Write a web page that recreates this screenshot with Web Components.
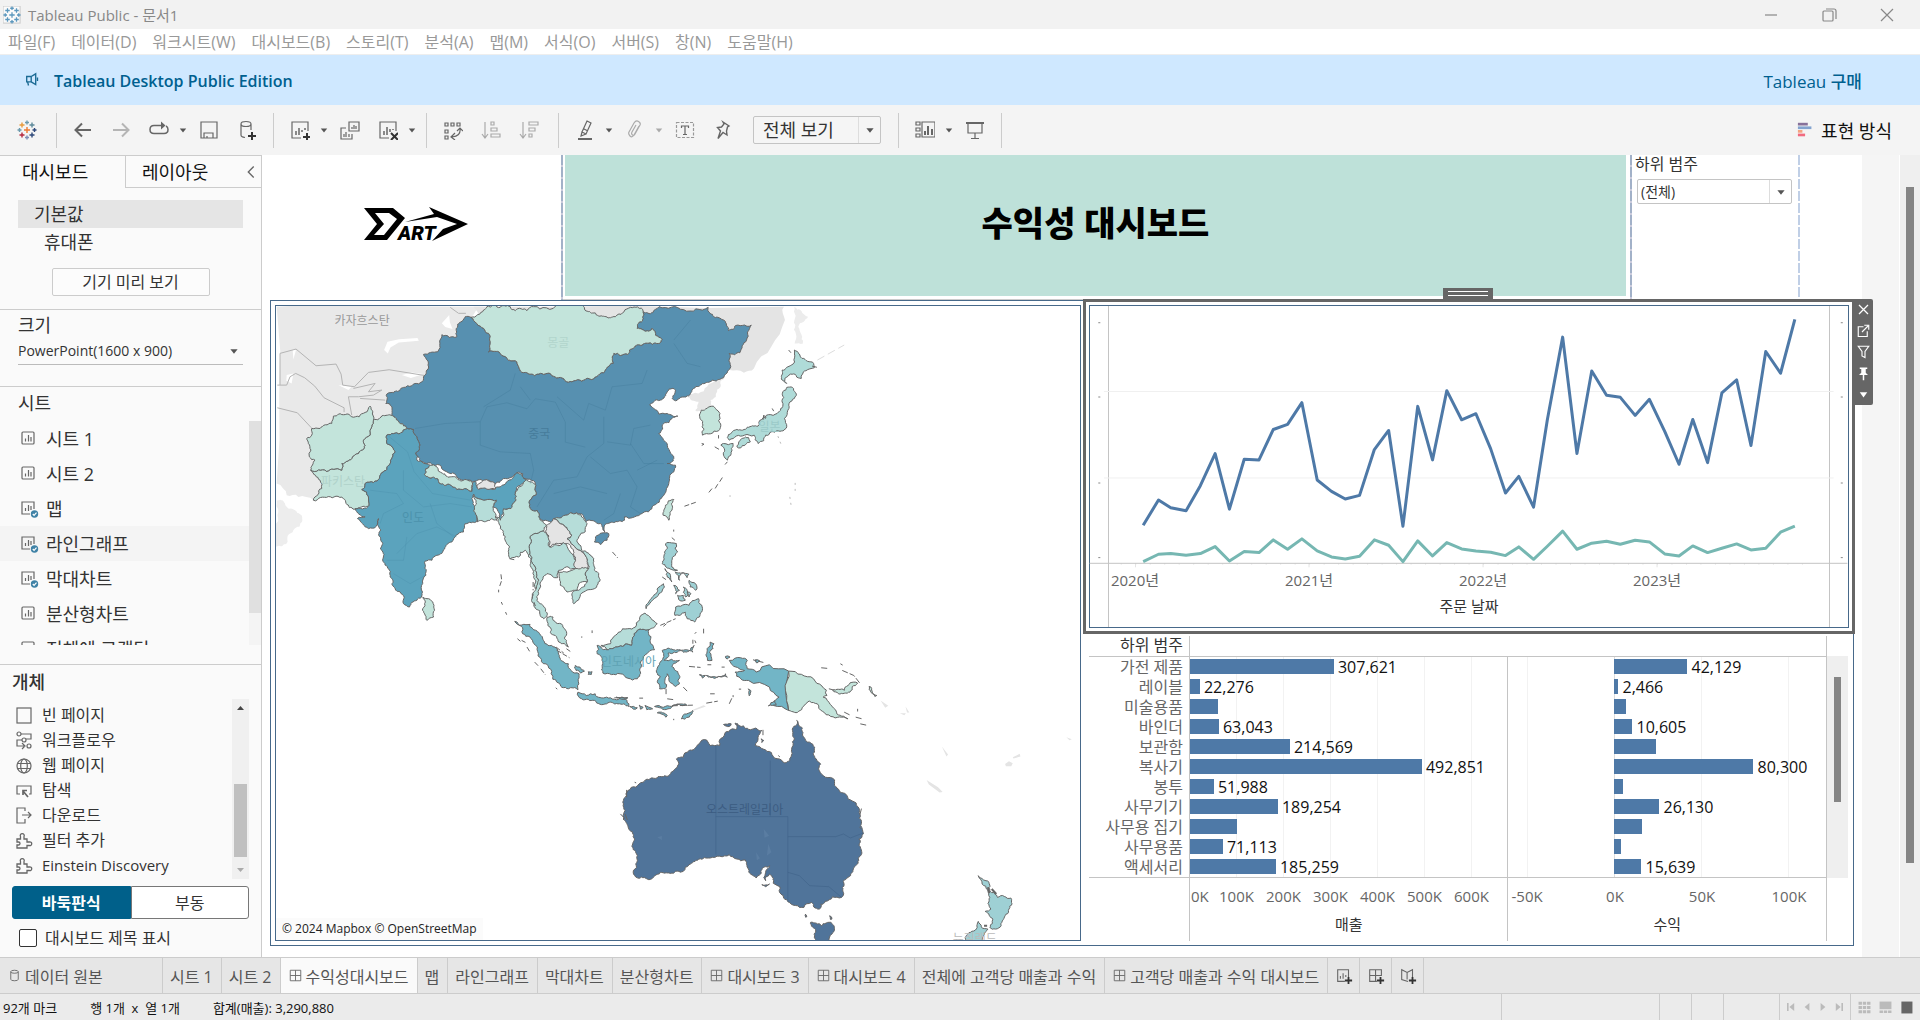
<!DOCTYPE html>
<html lang="ko">
<head>
<meta charset="utf-8">
<title>Tableau Public - 문서1</title>
<style>
html,body{margin:0;height:100%}
body{font-family:"Open Sans","Noto Sans CJK KR",sans-serif;color:#333;font-size:16px;overflow:hidden}
</style>
</head>
<body>
<app-window></app-window>
<script>
const BASE = `*{box-sizing:border-box}button,select,input{font:inherit;color:inherit;margin:0}
button{background:none;border:0;padding:0;text-align:left;white-space:nowrap}:host{display:block}`;
function define(name, css, html, after) {
  customElements.define(name, class extends HTMLElement {
    connectedCallback() {
      if (this.shadowRoot) return;
      const root = this.attachShadow({ mode: 'open' });
      root.innerHTML = `<style>${BASE}${css}</style>` + (typeof html === 'function' ? html(this) : html);
      if (after) after(this, root);
    }
  });
}

/* ---------- icons ---------- */
const plus = (x, y) => `<path d="M${x - 4} ${y}h8M${x} ${y - 4}v8" stroke="#333" stroke-width="2"/>`;
const cross = (x, y, c, r = 2) => `<path d="M${x - r} ${y}h${2 * r}M${x} ${y - r}v${2 * r}" stroke="${c}" stroke-width="1.4"/>`;
const logo = c => cross(10, 10, c[0], 3) + cross(5, 5, c[1], 2.5) + cross(15, 5, c[2], 2.5) + cross(5, 15, c[3], 2.5) + cross(15, 15, c[4], 2.5) + cross(10, 2.5, c[5]) + cross(10, 17.5, c[6]) + cross(2.5, 10, c[5]) + cross(17.5, 10, c[4]);
const ICONS = {
  app: '<rect x="0" y="0" width="19" height="19" fill="#fafafa" stroke="#ccc"/>' + logo(Array(7).fill('#5b97bd')),
  color: logo(['#eb7a32', '#e79a3c', '#5d8a9b', '#b5283f', '#2d4879', '#6c9aad', '#7d8fb6']),
  horn: '<path d="M3 5h5v6H3zM4 11l1 4M8 5l5-3v12l-5-3M15 6v4" stroke="#1b6a94" stroke-width="1.5"/>',
  back: '<path d="M18 10H3M9 3.5L2.5 10 9 16.5" stroke-width="2"/>',
  fwd: '<path d="M2 10h15M11 3.5l6.5 6.5L11 16.5" stroke="#b5b5b5" stroke-width="2"/>',
  redo: '<path d="M13 5.500H5q-4 0-4 4t4 4h10q4 0 4-4 0-2.500-2-3.500" stroke-width="1.500"/><path d="M12 1.500v8l4.500-4z" fill="#666" stroke="none"/>',
  save: '<path d="M2 2h16v16H2zM5 18v-5h9v5M8 18v-2"/>',
  db: '<path d="M4 4v11q0 2 4 2.500M4 4q0-2.500 5-2.500T14 4v6M4 4q0 2.500 5 2.500T14 4"/>' + plus(15, 16),
  sheetadd: '<path d="M11 18H2V2h16v9"/><path d="M6 15v-4M9 15V8M12 12V10M15 10V8" stroke-width="1.500"/>' + plus(17, 17),
  dup: '<path d="M9 2h10v9H9zM12 9V7M14 9V5M16 9V6M6 8H1v11h11v-5M4 17v-3M6 17v-5M9 17v-3"/>',
  clear: '<path d="M11 18H2V2h16v9"/><path d="M6 15v-4M9 15V7M12 12V9M15 10V9" stroke-width="1.500"/><path d="M13 13l7 7M20 13l-7 7" stroke="#333" stroke-width="2"/>',
  swap: '<path d="M2 3h3v3H2zM8 3h3v3H8zM14 3h3v3h-3zM2 10h3v3H2zM2 16h3v3H2zM17 9q1 7-8 8M12 13l-4 4 4 3M14 11l3-3 3 3"/>',
  asc: '<path d="M4 2v15M1 14l3 4 3-4M10 2h3v3h-3zM10 8h6v3h-6zM10 14h9v3h-9z" stroke="#aaa"/>',
  desc: '<path d="M4 2v15M1 14l3 4 3-4M10 2h9v3h-9zM10 8h6v3h-6zM10 14h3v3h-3z" stroke="#aaa"/>',
  pen: '<path d="M12 1l4 2-5 11-4-2zM7 12l-1 4 5-2M9 9l4 2"/><path d="M3 19h14" stroke-width="2"/>',
  clip: '<path d="M14 6l-5 9q-2 3-4 1t-1-4l5-9q2-3 4.500-1.500T15 5l-5 9q-1 2-2.500 1T7 12l4-7" stroke="#aaa"/>',
  text: '<rect x="1.500" y="2.500" width="17" height="15" stroke="#999" stroke-dasharray="3 1.500"/><path d="M6.500 8V6h7v2M10 6v8M8 14.500h4"/>',
  pin: '<path d="M10 2l6 4-1.500 1-1 4 .5 4-4-2.500-5 6 2.500-7.500-3-3.500 4-.5 2.500-3z" stroke-width="1.400"/>',
  cards: '<path d="M1 2h4v3H1zM1 8h4v3H1zM1 14h4v3H1zM7 2h13v15H7z"/><path d="M10 15v-4M13 15V6M17 15V9" stroke-width="2"/>',
  show: '<path d="M1 3h18" stroke-width="2"/><path d="M3 3v10h14V3M10 13v5M6 18.500h8"/>',
  showme: '<path d="M1 3.500h11" stroke="#87719a" stroke-width="3"/><path d="M1 7.500h15" stroke="#83a3cf" stroke-width="3"/><path d="M1 11.500h5" stroke="#f5a380" stroke-width="3"/><path d="M1 15.500h8" stroke="#f16b80" stroke-width="3"/>',
  caret: '<path d="M6 8h8l-4 5z" fill="#555" stroke="none"/>',
  caretoff: '<path d="M6 8h8l-4 5z" fill="#aaa" stroke="none"/>',
  left: '<path d="M13 4l-6 6 6 6" stroke-width="1.500"/>',
  sheet: '<rect x="3" y="3" width="12" height="12" rx="1"/><path d="M6.500 12.500v-3M9.500 12.500V6M12 12.500V8"/>',
  sheetok: '<path d="M11 15H3V3h12v7"/><path d="M6.500 12v-3M9.500 12V6M12 11V7"/><circle cx="15.500" cy="15" r="3.700" fill="#3f82a6" stroke="none"/><path d="M13.800 15l1.300 1.400 2.400-2.700" stroke="#fff" stroke-width="1.200"/>',
  blank: '<rect x="3" y="3" width="14" height="15"/>',
  flow: '<circle cx="5" cy="4" r="2"/><circle cx="15" cy="16" r="2"/><circle cx="10" cy="10" r="2"/><path d="M7 4h10v5h-5M8 10H3v6h7M8 13l3 3-3 3"/>',
  web: '<circle cx="10" cy="11" r="7"/><ellipse cx="10" cy="11" rx="3.300" ry="7"/><path d="M3.800 8.500h12.400M3.800 13.500h12.400"/>',
  nav: '<path d="M6 14H3V6h14v8h-2"/><path d="M14 17l-5-6M9 15v-4.500h4" stroke-width="1.700"/>',
  down: '<path d="M11 6V3H3v15h8v-4M8 10h9M14 7l3 3-3 3"/>',
  ext: '<path d="M3 9h3.500V6.500a2 2 0 1 1 3.500 0V9h3v3h2.500a1.800 1.800 0 1 1 0 3.500H13V18H3v-3h1.500a1.500 1.500 0 0 0 0-3H3z" stroke-width="1.300"/>',
  cyl: '<path d="M5 5v10q0 2 5 2t5-2V5q0-2-5-2T5 5q0 2 5 2t5-2"/>',
  grid: '<path d="M3 3h14v14H3zM10 3v14M3 10h14"/>',
  addsheet: '<path d="M11 16H3V3h12v8M6 13v-3M9 13V7M12 11V9"/>' + plus(15, 15),
  adddash: '<path d="M11 16H3V3h13v7M3 9.500h13M9.500 3v13"/>' + plus(15, 15),
  addstory: '<path d="M10 16l-7-2V3l6 3 6-3v8M9 6v8"/>' + plus(15, 15),
  min: '<path d="M4 10h12" stroke="#888"/>',
  max: '<rect x="4" y="6" width="10" height="10" rx="1" stroke="#888"/><path d="M7 4h8q2 0 2 2v8" stroke="#888"/>',
  close: '<path d="M4 4l12 12M16 4L4 16" stroke="#888"/>',
  wx: '<path d="M4 4l12 12M16 4L4 16" stroke="#fff" stroke-width="1.700"/>',
  wopen: '<path d="M10 5H3v13h12v-7M8 12l8-8M11 3h6v6" stroke="#fff" stroke-width="1.500"/>',
  wfilter: '<path d="M3 3h14l-5 7v8l-4-2v-6z" stroke="#fff" stroke-width="1.500"/>',
  wpin: '<path d="M5 3h10M10 12v7" stroke="#fff" stroke-width="2"/><path d="M7 4h6v5l3 3H4l3-3z" fill="#fff" stroke="none"/>',
  wdown: '<path d="M5 7h10l-5 7z" fill="#fff" stroke="none"/>',
  first: '<path d="M6 5v10" stroke="#bbb" stroke-width="2"/><path d="M14 5v10l-6-5z" fill="#bbb" stroke="none"/>',
  prev: '<path d="M13 5v10l-6-5z" fill="#bbb" stroke="none"/>',
  next: '<path d="M7 5v10l6-5z" fill="#bbb" stroke="none"/>',
  last: '<path d="M14 5v10" stroke="#bbb" stroke-width="2"/><path d="M6 5v10l6-5z" fill="#bbb" stroke="none"/>',
  tiles: '<path d="M3 5h14M3 10h14M3 15h14" stroke="#bbb" stroke-width="3.500" stroke-dasharray="4 1"/>',
  film: '<path d="M3 3h14v9H3z" fill="#bbb" stroke="none"/><path d="M3 15h14" stroke="#bbb" stroke-width="3" stroke-dasharray="4 1"/>',
  full: '<path d="M4 3h13v14H4z" fill="#666" stroke="none"/>'
};
define('ui-icon', ':host{display:inline-flex;flex:none}svg{display:block}',
  el => { const s = el.getAttribute('size') || 20; return `<svg width="${s}" height="${s}" viewBox="0 0 20 20" fill="none" stroke="#666" stroke-width="1.2">${ICONS[el.getAttribute('name')]}</svg>`; });
const ic = (n, s = 20) => `<ui-icon name="${n}" size="${s}"></ui-icon>`;

/* ---------- window chrome ---------- */
define('title-bar', `:host{display:flex;align-items:center;height:29px;background:#f2f2f2;color:#888;font-size:15px;padding:0 4px 0 3px}
span{flex:1;padding-left:7px}button{width:58px;display:flex;justify-content:center}`,
  `${ic('app', 18)}<span>Tableau Public - 문서1</span><button aria-label="최소화">${ic('min')}</button><button aria-label="이전 크기">${ic('max')}</button><button aria-label="닫기">${ic('close')}</button>`);

define('menu-bar', `:host{display:flex;align-items:center;height:26px;padding-left:8px;gap:16px;color:#999;font-size:16px;line-height:24px;background:#fff;border-bottom:1px solid #eee}`,
  ['파일(F)', '데이터(D)', '워크시트(W)', '대시보드(B)', '스토리(T)', '분석(A)', '맵(M)', '서식(O)', '서버(S)', '창(N)', '도움말(H)'].map(t => `<button>${t}</button>`).join(''));

define('edition-banner', `:host{display:flex;align-items:center;height:50px;background:#cfe8ff;color:#00608f;padding:1px 58px 0 24px;font-size:16px}
a{margin-left:auto;color:inherit;text-decoration:none;font-weight:500;font-size:17px}strong{margin-left:12px;font-weight:600}`,
  `${ic('horn', 18)}<strong>Tableau Desktop Public Edition</strong><a href="#">Tableau 구매</a>`);

define('tool-bar', `:host{display:flex;align-items:center;gap:14px;height:50px;background:#f4f4f4;padding:0 28px 0 15px}
button{width:24px;height:28px;display:flex;align-items:center;justify-content:center;flex:none}
.caret{width:10px;margin:0 -5px 0 -7px}
i{width:1px;height:35px;background:#ccc;flex:none}i.a{margin-left:3px}
.sel{display:flex;height:28px;width:128px;border:1px solid #c4c4c4;border-radius:2px;background:#f5f5f5;margin-left:4px}
select{appearance:none;border:0;background:none;width:100%;padding:0 9px;font-size:18px;color:#333}
.sel ui-icon{border-left:1px solid #ddd;width:22px;align-items:center;justify-content:center}
.me{margin-left:auto;width:auto;gap:6px;font-size:18px;color:#111}`,
  (() => {
    const b = n => `<button aria-label="${n}">${ic(n)}</button>`, c = n => `<button class="caret" aria-label="메뉴">${ic(n || 'caret', 16)}</button>`;
    return b('color') + '<i class="a"></i>' + b('back') + b('fwd') + b('redo') + c() + b('save') + b('db') + '<i></i>' + b('sheetadd') + c() + b('dup') + b('clear') + c() + '<i></i>' + b('swap') + b('asc') + b('desc') + '<i class="a"></i>' + b('pen') + c() + b('clip') + c('caretoff') + b('text') + b('pin') +
      `<div class="sel"><select aria-label="맞춤"><option>전체 보기</option></select>${ic('caret', 18)}</div><i class="a"></i>` + b('cards') + c() + b('show') + '<i></i>' + `<button class="me">${ic('showme', 18)}표현 방식</button>`;
  })());

/* ---------- left pane ---------- */
define('side-pane', `:host{display:flex;flex-direction:column;width:262px;flex:none;background:#fafafa;border-right:1px solid #ccc;border-top:1px solid #ccc}
.tabs{display:flex;height:32px;font-size:18px;line-height:28px;color:#111}.tabs button{width:125px;padding:0 22px}
.tabs div{flex:1;display:flex;border:solid #ccc;border-width:0 0 1px 1px;align-items:center;justify-content:space-between;padding-right:1px}.tabs div button{width:auto;padding:0 0 0 16px}
.dev{display:flex;flex-direction:column;padding:12px 18px;height:122px;border-bottom:1px solid #ccc;font-size:18px}
.dev>button{height:28px;padding-left:16px;line-height:26px}.dev .on{background:#e5e5e5}.dev .ph{padding-left:26px}
.dev .pv{align-self:center;width:158px;text-align:center;padding:0;border:1px solid #ccc;border-radius:2px;font-size:16px;margin:12px 0 0;background:#fcfcfc}
.size{height:77px;padding:3px 18px;border-bottom:1px solid #ccc;font-size:18px}.size label{display:block;line-height:24px}
.size div{display:flex;align-items:center;border-bottom:1px solid #bbb;height:28px}.size select{appearance:none;border:0;background:none;font-size:14px;flex:1;padding:0}
.sheets{height:278px;display:flex;flex-direction:column;border-bottom:1px solid #ccc;padding-bottom:19px;font-size:18px}
h3{margin:0;font:inherit;font-size:18px;line-height:24px}.sheets h3{padding:4px 18px 6px}
.list{flex:1;overflow:hidden;display:flex;min-height:0}.rows{flex:1}
.rows button{display:flex;align-items:center;gap:7px;width:100%;height:35px;padding-left:19px;font-size:18px;line-height:30px}.rows .hov{background:#f4f4f4}
.sb{width:12px;background:#f4f4f4}.sb b{display:block;height:192px;background:#e0e0e0}
.obj{padding:5px 12px 0;flex:1}.obj h3{font-weight:500}
.ol{display:flex;height:180px;overflow:hidden;margin-top:5px}.ol div{flex:1}.ol .it{display:flex;align-items:center;gap:8px;height:25px;font-size:16px;line-height:24px;padding-left:2px;width:100%}
.ol .it:first-child{margin-top:3px}.ol .en{font-size:15px}.ol .os{flex:none;width:17px;background:#f0f0f0;display:flex;flex-direction:column;align-items:center;justify-content:space-between}.os b{width:13px;height:73px;background:#c0c0c0;margin-top:62px}
.seg{display:flex;margin-top:7px;height:33px;font-size:16px;line-height:28px}.seg button{flex:1;text-align:center;border:1px solid #777;border-radius:0 3px 3px 0;background:#fff}.seg .on{background:#00608a;color:#fff;font-weight:700;border-color:#00608a;border-radius:3px 0 0 3px}
.ck{display:flex;align-items:center;gap:8px;padding:10px 0 0 7px;font-size:16px;line-height:18px}.ck input{appearance:none;width:18px;height:18px;border:1px solid #333;border-radius:2px;background:#fff}`,
  `<div class="tabs"><button>대시보드</button><div><button>레이아웃</button>${ic('left', 18)}</div></div>
<div class="dev"><button class="on">기본값</button><button class="ph">휴대폰</button><button class="pv">기기 미리 보기</button></div>
<div class="size"><label for="sz">크기</label><div><select id="sz"><option>PowerPoint(1600 x 900)</option></select>${ic('caret', 18)}</div></div>
<div class="sheets"><h3>시트</h3><div class="list"><div class="rows">${[['시트 1', 0], ['시트 2', 0], ['맵', 1], ['라인그래프', 1], ['막대차트', 1], ['분산형차트', 0], ['전체에 고객당', 0]].map(([t, u]) => `<button class="${t === '라인그래프' ? 'hov' : ''}">${ic(u ? 'sheetok' : 'sheet')}${t}</button>`).join('')}</div><div class="sb"><b></b></div></div></div>
<div class="obj"><h3>개체</h3><div class="ol"><div>${[['blank', '빈 페이지'], ['flow', '워크플로우'], ['web', '웹 페이지'], ['nav', '탐색'], ['down', '다운로드'], ['ext', '필터 추가'], ['ext', 'Einstein Discovery', 'en']].map(([i, t, c]) => `<button class="it ${c || ''}">${ic(i, 20)}${t}</button>`).join('')}</div><div class="os"><svg width="17" height="18"><path d="M5 11l3.500-4 3.500 4z" fill="#444"/></svg><b></b><svg width="17" height="18"><path d="M5 7l3.500 4L12 7z" fill="#aaa"/></svg></div></div>
<div class="seg"><button class="on">바둑판식</button><button>부동</button></div>
<div class="ck"><input type="checkbox" id="tt"><label for="tt">대시보드 제목 표시</label></div></div>`);

/* ---------- map ---------- */
/* Midpoint displacement gives the coast its ragged look; the offset depends only on
   the two end points, so neighbours sharing a border stay in step. */
function hash(a, b, c, d) { const s = Math.sin((a + c) * 12.9898 + (b + d) * 78.233 + a * c * 0.013 + b * d * 0.017) * 43758.5453; return s - Math.floor(s) - 0.5; }
function split(p, q, n, out) {
  const [x1, y1] = p, [x2, y2] = q, len = Math.hypot(x2 - x1, y2 - y1);
  if (n && len > 7) {
    const k = hash(x1, y1, x2, y2) * 0.42 * Math.min(1, 40 / len), f = (x1 < x2 || (x1 === x2 && y1 < y2)) ? 1 : -1;
    const m = [(x1 + x2) / 2 - (y2 - y1) * k * f, (y1 + y2) / 2 + (x2 - x1) * k * f];
    split(p, m, n - 1, out); split(m, q, n - 1, out);
  } else out.push(q);
}
function land(str, fill, extra = '', n = 4) {
  const v = str.trim().split(/[ ,]+/).map(Number), pts = [];
  for (let i = 0; i < v.length; i += 2) pts.push([v[i], v[i + 1]]);
  const out = [pts[0]];
  for (let i = 0; i < pts.length; i++) split(pts[i], pts[(i + 1) % pts.length], n, out);
  return `<path d="M${out.map(p => p[0].toFixed(1) + ' ' + p[1].toFixed(1)).join('L')}Z" fill="${fill}" ${extra}/>`;
}
const C = { cn: '#5790b0', ind: '#5ba3bd', lt: '#c3e4db', id: '#72b5c6', au: '#50749a', th: '#b6ddd9', jp: '#afdbd8', ph: '#9ed0d4', gr: '#e4e4e4' };
const N = 'stroke="none"';
const MONG_S = '1118,65 1100,115 1130,122 1145,115 1175,148 1115,165 1072,193 1030,190 1028,220 1000,248 910,272 870,262 830,250 755,247 735,212 690,190 655,185 658,150 640,115 602,82';
const north =
  land('20,50 640,50 600,85 640,300 400,500 300,640 238,652 220,625 130,630 85,620 50,615 20,580', '#e9e9e9', N, 2) +
  land('20,630 45,640 75,660 97,690 70,720 50,760 20,770', '#ededed', N) +
  land('610,50 1540,50 1543,90 1502,170 1450,235 1420,248 1376,240 1350,200 1100,120 640,100', '#e4e4e4', N, 2) +
  land('1250,317 1365,252 1350,290 1320,330 1325,348 1290,362 1275,362 1284,335', '#e6e6e6', N) +
  land('1570,50 1612,80 1583,110 1597,160 1572,160', '#ececec', N) +
  `<g fill="#fff" stroke="none"><path d="M342 180l10-25 35-7 55-4 4 8-60 5-25 15-8 18zM395 255l30-8 35 5-38 12zM515 100l22-25 2 22 8 20-22-6zM68 180l10 0-8 28zM50 255l20-5-5 30-16-8zM205 285l40 5-10 10z"/></g>
  <g stroke="#b4b4b4" fill="none"><path d="M30 285V190l48-13 60 50 60-5 15 30 5 33 35 5 42-43 62-8 105 17M22 285h28l10-25 17-10 27 13 30 25 28 35 60 30v13M22 353l60 15 42 45M250 295l65-15-20 25 40-5-25 15-45 5-30 0 10 55M270 325l75 5M540 52l25 18 22 0"/></g>` +
  land('602,82 585,80 562,103 560,140 515,134 503,185 460,193 474,237 460,265 425,287 400,292 350,312 347,340 365,350 370,378 412,415 430,418 440,440 447,480 436,488 450,512 490,525 530,545 560,560 600,570 615,573 650,570 672,582 700,565 740,548 757,550 760,565 778,567 795,582 796,615 778,630 780,655 800,660 805,680 825,690 845,705 850,685 870,690 885,675 918,668 940,680 945,695 990,700 1003,725 1005,702 1062,690 1062,680 1110,672 1150,645 1175,620 1195,580 1210,545 1215,525 1190,520 1210,505 1190,460 1165,430 1180,400 1205,385 1222,378 1190,370 1165,372 1150,355 1138,345 1150,335 1170,330 1190,305 1205,295 1215,300 1205,325 1215,332 1250,317 1296,280 1325,270 1365,252 1379,235 1376,190 1408,188 1428,150 1442,105 1422,105 1374,122 1365,95 1319,70 1313,52 1166,50 1147,68 ' + MONG_S, C.cn) +
  land('602,82 640,60 650,50 720,50 735,62 770,62 790,50 940,50 985,78 1040,75 1080,52 ' + MONG_S, C.lt) +
  land('310,390 340,376 370,378 412,415 390,430 350,435 352,462 375,485 360,520 340,545 310,577 285,580 275,598 295,620 297,645 238,652 220,625 130,630 155,595 150,570 122,540 215,540 215,520 245,505 265,490 285,465 280,450 300,435 305,410', C.lt) +
  land('125,415 150,415 185,400 190,378 205,372 245,380 285,367 300,348 308,365 310,390 305,410 300,435 280,450 285,465 265,490 245,505 215,520 215,540 122,540 135,510 118,500 115,460 110,445 125,435', C.lt) +
  land('350,435 390,430 412,415 430,418 440,440 447,480 436,488 440,510 480,525 463,553 510,580 560,598 605,603 605,580 615,573 622,595 672,597 740,548 760,565 770,575 735,605 722,655 700,660 690,690 680,655 668,650 678,630 635,628 610,612 608,640 620,690 585,700 580,725 545,755 500,795 465,812 467,855 457,905 440,930 418,950 400,940 390,905 360,860 340,800 332,750 325,685 318,708 295,715 262,685 285,680 255,655 297,645 295,620 275,598 285,580 310,577 340,545 360,520 375,485 352,462', C.ind) +
  land('480,525 500,530 540,560 605,575 605,603 560,598 510,580 463,553', C.lt) +
  land('620,590 650,568 675,580 675,597 625,597', C.gr) +
  land('610,612 635,628 678,630 668,650 680,690 665,685 650,692 620,695 612,650', C.th) +
  land('735,605 770,568 795,582 796,615 778,630 780,655 800,660 805,680 828,705 820,722 780,738 778,780 795,830 805,870 795,895 788,850 775,800 765,780 745,800 720,805 718,770 705,740 690,715 678,680 690,690 700,655 722,655', '#bde0da') +
  land('780,738 820,722 828,728 838,770 870,765 880,757 905,790 915,835 865,840 862,862 830,850 818,865 805,910 800,930 830,975 820,985 790,940 795,900 805,870 795,830 778,780', C.th) +
  land('850,685 870,700 890,712 905,735 890,745 930,780 950,805 950,835 920,840 915,800 880,757 838,770 828,705', C.gr) +
  land('850,685 885,675 918,668 940,685 950,700 925,740 920,755 965,800 985,850 980,885 940,905 910,940 905,910 930,895 950,875 955,835 950,805 930,780 890,745 905,735 890,712 870,700', C.th) +
  land('862,845 915,835 955,835 950,875 925,880 920,900 890,905 870,885', C.lt) +
  land('458,920 475,925 493,960 490,980 470,990 457,960', C.lt) +
  land('975,740 995,728 1015,730 1010,750 990,763 972,755', C.cn) +
  land('1210,628 1195,690 1178,675 1185,645', C.lt) +
  `<g fill="none" stroke="#3f7796" stroke-opacity=".32"><path d="M435 415l90-15 105-5 0 70 60 20 90 5 10 50-10 40M640 350l80-50 15-50M630 395l20-45 60-12 60 18 25-30 60 10 30 60 0 60 60 15M780 330l-30-40M860 320l80 70 15-50 50 20 20-70 90-10 15-40M1000 380l0 80-50 40-30 60-70 10-50 80M1010 455l70 10 10-50 50-10M960 500l60 50 50-10 30 50-20 60 30 20M1080 460l40 60 60 0M1050 610l-20 60-30 20M1100 540l60-30M1210 160l40 60 40 10M1260 90l-50 60M850 610l80-20 80 20"/></g>
  <g fill="none" stroke="#438aa5" stroke-opacity=".28"><path d="M352 435l60 50 20 60 55 65 115 20M300 600l80 10 20 30-60 30-10 30M400 540l0 60 60 50 80-10 65 10M380 790l60-60 60-20 60 30M350 810l50 0 10-70M370 850l50 30 45-25M480 640l20 60 50 40"/></g>`;
const east =
  land('800,262 815,262 820,295 803,330 800,380 790,392 760,395 745,405 725,430 715,405 690,405 650,420 645,412 670,388 725,378 735,358 775,340 790,310 790,275', C.jp) +
  land('820,150 840,175 870,190 872,203 850,212 838,235 810,222 795,235 800,250 788,240 788,210 812,195', C.jp) +
  land('635,430 660,430 655,460 645,480 635,465 638,450 628,435', C.jp) + land('675,425 700,412 705,425 680,443 670,440', C.jp) +
  land('577,330 608,318 625,350 622,392 580,405 580,370 573,350', C.lt) +
  land('487,727 512,730 515,755 500,780 500,800 515,810 500,808 485,800 475,790 482,760', C.ph) +
  ['482,805 495,820 500,845 488,830', '510,815 525,820 520,840', '545,840 562,850 562,870 548,860', '505,855 520,870 510,880', '515,885 530,885 535,900 520,900', '530,860 540,870 536,890', '525,818 545,822 540,832', '540,875 550,880 545,890', '472,855 478,850 465,885 433,925 440,905',
    '570,895 578,935 572,950 560,965 540,955 535,935 508,945 510,920 535,912 545,915'].map(p => land(p, C.ph)).join('') +
  land('175,950 190,950 215,975 220,1015 230,1040 205,1025 185,1000', C.th) +
  land('430,938 462,970 440,988 410,990 395,1035 330,1048 315,1035 340,1030 345,1015 385,985 405,980', C.th) +
  land('305,1035 330,1048 395,1035 410,990 440,988 445,1030 455,1048 435,1060 420,1100 410,1135 365,1120 320,1118 318,1080 305,1060', C.id) +
  land('90,963 130,972 165,1020 195,1040 230,1090 258,1120 255,1168 230,1165 185,1120 140,1030', C.id) +
  land('248,1095 260,1100 272,1112 262,1118 250,1110', C.id) + land('282,1114 292,1114 290,1122 282,1122', C.id) +
  `<path d="M54 822l2 18-6 20M48 868v8M55 905l3 8M66 935l3 8M97 1015l8 8M108 1020l10 6M122 1040l8 15M142 1085l10 12M158 1105l12 18M632 532l-10 18M620 552l-8 15M605 565l-10 14M645 485l-6 8M533 618l30-12M505 688v6M500 712l8 8M740 345l6 8-8 6zM762 325l4 8M578 430l6 2-6 4zM612 440l12 8M622 405v10M805 150l6 8M866 198l14 4M345 755l14 18M470 975l40-20M486 970l-8 8M560 1020l3 8M560 1000l4-5M583 985v14M292 990v8M265 1008v4M138 845v25M136 880v15M140 905l4 12M76 775l16 4M198 1040l20 18M225 1045l10 8M215 1060l18 12M200 1050l16 10M475 830l10 8" fill="none" stroke-dasharray="5 2"/>
   <path d="M880 180l70-45" stroke="#ddd" stroke-dasharray="8 4"/><path d="M777 408l10 30M822 548v28M808 590l4 30M652 585v5" stroke="#bbb" stroke-dasharray="2 4" fill="none"/>`;
const south =
  land('255,335 300,340 330,350 370,350 388,370 388,378 330,370 265,355', C.id) +
  land('475,210 490,203 545,212 558,195 555,215 490,218 480,240 520,240 500,258 520,310 510,318 488,280 482,300 482,325 468,325 470,290 460,275 470,245', C.id) +
  land('650,240 680,232 697,240 697,265 720,275 755,253 805,272 805,390 765,375 780,350 755,320 700,300 680,295 665,275 690,270 655,250', C.id, '', 2) +
  land('805,272 870,295 905,345 895,350 930,395 960,415 915,408 880,370 860,362 835,390 805,390', C.lt, '', 3) +
  land('920,330 950,330 975,305 985,308 965,335 935,340', C.lt) + land('1015,318 1035,345 1030,348', C.lt) +
  ['600,185 610,190 598,215 605,240 593,240 592,205', '590,285 640,280 645,290 600,290', '572,283 588,285 580,293', '525,415 555,390 550,403', '462,397 488,405 485,410', '390,378 410,382 400,386', '430,375 450,385 435,388', '455,378 500,378 540,375 490,385', '752,376 768,360 772,374', '700,325 706,330 702,346', '355,350 385,352 380,356', '415,374 425,380 418,386', '640,228 652,230 645,236', '718,238 730,242 722,248'].map(p => land(p, C.id)).join('') +
  `<path d="M545 258l30 3M593 253h10M630 260h8M500 376l55-2M590 368l30-6M650 370l8-20M660 350v-6M890 262l18 2M940 250l6 4M945 270l30 15 15 22M910 325l14 4M950 395l14 8M985 385v8M980 410l20 6M992 430l16 4M485 325v16M488 355l20 3M530 320l10 12M350 352l35 0M415 353h10M600 340h12M675 326h6M505 415v4M197 322l4 4M712 238l10 4M725 242l14 4M555 190v-12" fill="none" stroke-dasharray="6 2"/>` +
  land('826,420 845,470 860,485 873,500 885,570 925,598 940,635 960,655 990,690 993,735 1000,760 988,830 960,890 945,920 943,950 900,962 885,985 865,965 845,980 803,963 785,940 782,918 765,908 755,880 745,900 740,890 755,855 720,892 700,865 692,838 650,822 600,832 545,852 530,872 470,875 440,897 415,893 400,880 408,860 408,820 398,790 385,735 375,710 378,690 374,670 385,630 425,605 490,587 515,555 512,535 530,530 545,510 585,477 600,495 625,495 640,455 670,445 670,432 735,450 725,470 718,495 795,547 808,540 815,450', C.au) +
  land('862,1025 890,1035 918,1028 918,1060 910,1080 875,1080', C.au) +
  ['635,432 655,430 650,438', '735,912 755,910 745,918', '912,1005 918,1015 914,1016', '849,1000 853,1006 850,1010', '733,475 740,480 735,486', '665,428 672,430 668,434'].map(p => land(p, C.au)).join('') +
  `<path d="M366 700l8 10 0 8M378 700l6 18M995 684l-4 18M382 628v22M778 525l4 4M738 448v16M990 740l4 4M403 605l4 2" fill="none"/>
  <g stroke="#3f6288" stroke-opacity=".6" fill="none"><path d="M615 495V822M615 708H803M757 540V708M803 708V963M803 768H928l20-8 18 12 34-15M803 875l30 10 27 30 50 3 33 32"/></g>
  <g fill="#5a7da2" stroke="none"><path d="M740 745l14 20-12 6zM752 790l8 25-12 10zM720 815l10 18-8 6zM462 770l12-4 0 12z"/></g>` +
  land('1300,885 1320,900 1330,930 1350,950 1385,952 1380,985 1345,1045 1330,1040 1338,1015 1318,992 1333,985 1330,950 1310,910', C.ph) +
  land('1300,1022 1325,1045 1310,1080 1265,1080', C.ph) +
  `<path d="M1335 925l12 15M1325 920l4 18M1315 1035l8 0" fill="none" stroke-width="2"/>
  <g fill="#e4e4e4" stroke="none"><path d="M1165 598l30 22 12 14-8 2-28-24zM1370 550l10-8 10 6-4 9-14 0zM1390 530l18-10 2 8-18 6zM1205 498l16 24-4 6zM555 388l28-14 6 4-30 12zM1045 360l20 16-8 6zM1095 398l16 0-4 6zM1110 378l10 18-6 0zM1125 410l8 8zM1530 470l14 6-6 3z"/></g>`;
define('map-view', `:host{position:relative;border:1px solid #47698a;overflow:hidden;background:#fff;min-width:0}
svg{position:absolute;inset:0;width:100%;height:100%}path{vector-effect:non-scaling-stroke}
p{position:absolute;left:0;bottom:0;margin:0;padding:1px 6px;font-size:12px;line-height:20px;background:#fafafacc;color:#222}
text{font-size:12px;text-anchor:middle;stroke:none}`,
  `<svg viewBox="276 306 803 634" preserveAspectRatio="xMinYMin slice" stroke="#666" role="img" aria-label="맵">
<g transform="translate(270 290) scale(.33333)">${north}</g>
<g transform="translate(480 300) scale(.38265 .33333)">${east}</g>
<g transform="translate(480 580) scale(.38265 .33333)">${south}</g>
<text x="362" y="325" fill="#999">카자흐스탄</text><text x="558" y="347" fill="#b2d5cc">몽골</text><text x="539" y="438" fill="#467c9b">중국</text><text x="413" y="522" fill="#4b92ac">인도</text><text x="343" y="486" fill="#b0d2ca">파키스탄</text><text x="769" y="431" fill="#9bcac8">일본</text><text x="628" y="666" fill="#5fa3b4">인도네시아</text><text x="744" y="813" fill="#3c5c82">오스트레일리아</text><text x="974" y="942" fill="#bbb">뉴질랜드</text></svg>
<p>© 2024 Mapbox © OpenStreetMap</p>`);

/* ---------- line chart ---------- */
const SALES = '123,703 153,628 177,651 207,660 235,585 264,489 292,655 321,506 350,508 378,417 406,402 434,337 464,568 492,602 519,625 547,614 576,477 604,420 632,706 661,348 690,508 718,301 747,388 775,370 804,475 833,607 859,557 888,649 915,388 945,141 973,489 1002,242 1031,315 1058,321 1087,375 1115,327 1145,423 1173,521 1200,387 1229,516 1257,308 1286,269 1314,465 1343,184 1372,249 1400,88';
const PROFIT = '123,812 153,790 177,788 207,793 235,788 264,767 292,810 321,782 350,785 378,747 406,775 434,744 464,780 492,798 519,804 547,796 576,747 604,763 632,812 661,750 690,795 718,755 747,774 775,780 804,784 833,794 859,768 888,805 915,766 945,721 973,775 1002,757 1031,751 1058,760 1087,748 1115,753 1145,789 1173,795 1200,765 1229,785 1257,772 1286,759 1314,777 1343,772 1372,724 1400,706';
let ticks = '';
for (let i = 0; i < 48; i++) ticks += `M${(80 + i * 28.4).toFixed(1)} 817v4`;
define('line-chart', `:host{position:relative;border:1px solid #47698a;background:#fff;display:flex;padding:0 18px;min-height:0}
.c{flex:1;border:solid #c4c4c4;border-width:0 1px;display:flex;flex-direction:column;font-size:15px}
svg{width:100%;flex:1;min-height:0;overflow:visible;display:block}svg *{vector-effect:non-scaling-stroke}
.y{display:flex;padding:7px 22px 0 2px;color:#666;height:32px;line-height:20px}.y span{flex:1}
.t{text-align:center;height:32px;line-height:22px}
.ring{position:absolute;inset:-7px;border:3px solid #666}
.grab{position:absolute;left:353px;top:-18px;width:50px;height:12px;border:solid #666;border-width:3px 5px 2px;background:linear-gradient(#fff 1px,#666 1px 4px,#fff 4px 5px,#666 5px)}
.tools{position:absolute;right:-25px;top:-7px;width:20px;height:106px;background:#666;border-radius:0 2px 2px 0;display:flex;flex-direction:column;justify-content:space-around;align-items:center}
.tools button{display:flex}`,
  `<div class="c"><svg viewBox="56 48 1411 768" preserveAspectRatio="none" fill="none"><path d="M46 303.500H1476M46 562H1476" stroke="#f0f0f0" stroke-width="1"/><path d="${ticks}M108 817v12M448 817v12M789 817v12M1130 817v12" stroke="#e4e4e4"/><path d="M18 817H1503" stroke="#c4c4c4"/><path d="M35 98h4M35 320h4M35 577h4M35 800h4M1490 98h4M1490 320h4M1490 577h4M1490 800h4" stroke="#888"/><polyline points="${PROFIT}" stroke="#76b7b2" stroke-width="3" stroke-linejoin="round"/><polyline points="${SALES}" stroke="#4e79a7" stroke-width="3" stroke-linejoin="round"/></svg>
<div class="y"><span>2020년</span><span>2021년</span><span>2022년</span><span>2023년</span></div><div class="t">주문 날짜</div></div>
<div class="ring"></div><div class="grab"></div><div class="tools">${['wx', 'wopen', 'wfilter', 'wpin', 'wdown'].map(n => `<button aria-label="${n}">${ic(n, 15)}</button>`).join('')}</div>`);

/* ---------- bar chart ---------- */
const ROWS = [['가전 제품', 144, '307,621', 73, '42,129'], ['레이블', 10, '22,276', 4, '2,466'], ['미술용품', 28, '', 12, ''], ['바인더', 29, '63,043', 18, '10,605'], ['보관함', 100, '214,569', 42, ''], ['복사기', 232, '492,851', 139, '80,300'], ['봉투', 24, '51,988', 9, ''], ['사무기기', 88, '189,254', 45, '26,130'], ['사무용 집기', 47, '', 28, ''], ['사무용품', 33, '71,113', 7, ''], ['액세서리', 86, '185,259', 27, '15,639']];
define('bar-chart', `:host{display:grid;grid-template-columns:101px 1fr 1fr 21px;grid-template-rows:21px 1fr 63px;background:#fff;min-height:0;padding-right:1px}
.h{text-align:right;padding-right:6px;line-height:18px;font-size:16px}.h,.hh{border-bottom:1px solid #c4c4c4;overflow:visible}.hh{grid-column:2/4;border-right:1px solid #c4c4c4}
.h,.n,.e{border-right:1px solid #c4c4c4}
.n,.p{display:grid;grid-template-rows:repeat(11,minmax(0,1fr));border-bottom:1px solid #c4c4c4;min-width:0;min-height:0}
.n{color:#666;text-align:right;padding-right:6px;font-size:16px}.n span,.p div{display:flex;align-items:center;justify-content:flex-end;line-height:18px}
.p,.a{border-right:1px solid #c4c4c4}.p div{justify-content:flex-start;gap:4px;color:#111;font-size:16px}
.p i{height:15px;background:#4e79a7}
.p1{background:repeating-linear-gradient(90deg,#fff 0 46px,#f2f2f2 46px 47px)}.p2{padding-left:106px;background:linear-gradient(#f2f2f2,#f2f2f2) 19px 0/1px 100% no-repeat,linear-gradient(#ddd,#ddd) 106px 0/1px 100% no-repeat,linear-gradient(#f2f2f2,#f2f2f2) 193px 0/1px 100% no-repeat,linear-gradient(#f2f2f2,#f2f2f2) 280px 0/1px 100% no-repeat}
.s{background:#efefef;padding:21px 7px 0;margin-top:-1px}.s b{display:block;height:125px;background:#858585}
.a{display:flex;flex-direction:column;font-size:15px;color:#666;text-align:center;padding-top:8px;min-width:0}
.k{display:flex;line-height:20px;height:28px}.k span{width:47px;flex:none;white-space:nowrap}.k span:first-child{width:23px;text-align:left;padding-left:1px}
.k2 span,.k2 span:first-child{width:87px;padding:0;text-align:center}.k2 span:first-child{width:63px;text-align:left;padding-left:3px}
.a p{margin:0;color:#333;line-height:20px}`,
  `<div class="h">하위 범주</div><div class="hh"></div><div></div>
<div class="n">${ROWS.map(r => `<span>${r[0]}</span>`).join('')}</div>
<div class="p p1">${ROWS.map(r => `<div><i style="width:${r[1]}px"></i>${r[2]}</div>`).join('')}</div>
<div class="p p2">${ROWS.map(r => `<div><i style="width:${r[3]}px"></i>${r[4]}</div>`).join('')}</div>
<div class="s"><b></b></div>
<div class="e"></div><div class="a"><div class="k"><span>0K</span><span>100K</span><span>200K</span><span>300K</span><span>400K</span><span>500K</span><span>600K</span></div><p>매출</p></div>
<div class="a"><div class="k k2"><span>-50K</span><span>0K</span><span>50K</span><span>100K</span></div><p>수익</p></div>`);

/* ---------- dashboard ---------- */
define('dash-board', `:host{flex:1;display:flex;min-width:0;background:#f5f5f5}
.cv{flex:1;background:#fff;display:flex;flex-direction:column;min-width:0}
.hd{display:flex;height:145px}
.lg{width:299px;flex:none;display:flex;justify-content:center;align-items:center;padding:0 0 6px 8px}
.mid{flex:1;border:solid #ccc;border-width:0 0 1px 0;padding:0 4px 3px 2px;display:flex}
.d{width:2px;background:repeating-linear-gradient(#c0cfe6 0 10px,#fff 10px 12px)}.d.k{background:repeating-linear-gradient(#a2b1c8 0 10px,#ccd 10px 12px)}
h1{margin:0;flex:1;background:#bee1d9;display:flex;align-items:center;justify-content:center;font-size:34px;font-weight:800;color:#000;padding-bottom:8px}
.f{width:166px;flex:none;padding-left:3px;font-size:16px}.f label{display:block;line-height:18px}
.sel{display:flex;margin:6px 6px 0 2px;height:25px;border:1px solid #c4c4c4;border-radius:2px;font-size:14px;align-items:center}
select{appearance:none;border:0;background:none;flex:1;padding:0 3px;min-width:0}.sel ui-icon{border-left:1px solid #ddd;width:22px;height:23px;justify-content:center;align-items:center}
.r{width:62px}
.fr{flex:1;border:1px solid #47698a;margin:0 8px 11px 8px;padding:4px 4px 4px 4px;display:flex;gap:8px;min-height:0}
map-view{flex:805 1 0}.rt{flex:761 1 0;display:flex;flex-direction:column;gap:8px;min-width:0}
line-chart{flex:322 1 0}bar-chart{flex:306 1 0}
.gut{width:37px;flex:none}.vs{width:21px;flex:none;background:#efefef;border-left:1px solid #fff;padding:32px 6px 0}.vs b{display:block;height:676px;background:#858585}`,
  `<div class="cv"><div class="hd"><div class="lg"><svg width="106" height="38" viewBox="0 0 106 38" role="img" aria-label="DART"><path d="M1 2h29l12 10-18 22H1l13-16zM12 7l9 11-10 11h10l13-16-8-6z" fill="#000" fill-rule="evenodd"/><text x="35" y="34" font-family="Roboto,sans-serif" font-size="20" font-weight="900" font-style="italic">ART</text><path d="M66 1l39 17-36 17 11-12 14-5-20-7-32 5 29-8z" fill="#000"/></svg></div>
<div class="d k"></div><div class="mid"><h1>수익성 대시보드</h1></div><div class="d k"></div><div class="f"><label for="sub">하위 범주</label><div class="sel"><select id="sub"><option>(전체)</option></select>${ic('caret', 18)}</div></div><div class="d"></div><div class="r"></div></div>
<div class="fr"><map-view></map-view><div class="rt"><line-chart></line-chart><bar-chart></bar-chart></div></div></div>
<div class="gut"></div><div class="vs"><b></b></div>`);

/* ---------- bottom ---------- */
define('sheet-tabs', `:host{display:flex;height:37px;background:#e6e6e6;border:solid #ccc;border-width:1px 0;color:#555;font-size:16px}
button{display:flex;align-items:center;gap:3px;border-right:1px solid #ccc;padding:0 8px 0 7px;flex:none}.src{width:163px}.on{background:#fafafa}.ad{width:32px;padding:0;justify-content:center}`,
  `<button class="src">${ic('cyl', 15)}데이터 원본</button>` + [['시트 1'], ['시트 2'], ['수익성대시보드', 1], ['맵'], ['라인그래프'], ['막대차트'], ['분산형차트'], ['대시보드 3', 1], ['대시보드 4', 1], ['전체에 고객당 매출과 수익'], ['고객당 매출과 수익 대시보드', 1]].map(([t, d]) => `<button class="${t === '수익성대시보드' ? 'on' : ''}">${d ? ic('grid', 15) : ''}${t}</button>`).join('') + ['addsheet', 'adddash', 'addstory'].map(n => `<button class="ad" aria-label="${n}">${ic(n, 18)}</button>`).join(''));

define('status-bar', `:host{display:flex;height:26px;background:#ebebeb;color:#111;font-size:13px;align-items:center;padding-left:3px}
span{margin-right:33px}.f{flex:1}i{align-self:stretch;border-left:1px solid #ccc;flex:none;display:flex;align-items:center;justify-content:center}
.v{gap:4px}`,
  `<span>92개 마크</span><span>행 1개 &nbsp;x&nbsp; 열 1개</span><span>합계(매출): 3,290,880</span><div class="f"></div><i style="width:158px"></i><i style="width:32px"></i><i style="width:32px"></i><i style="width:56px"></i><i class="n" style="width:71px">${['first', 'prev', 'next', 'last'].map(n => ic(n, 16)).join('')}</i><i class="v" style="width:70px">${['tiles', 'film', 'full'].map(n => ic(n, 17)).join('')}</i>`);

define('app-window', ':host{display:flex;flex-direction:column;height:100vh}main{flex:1;display:flex;min-height:0}',
  '<title-bar></title-bar><menu-bar></menu-bar><edition-banner></edition-banner><tool-bar></tool-bar><main><side-pane></side-pane><dash-board></dash-board></main><sheet-tabs></sheet-tabs><status-bar></status-bar>');
</script>
</body>
</html>
